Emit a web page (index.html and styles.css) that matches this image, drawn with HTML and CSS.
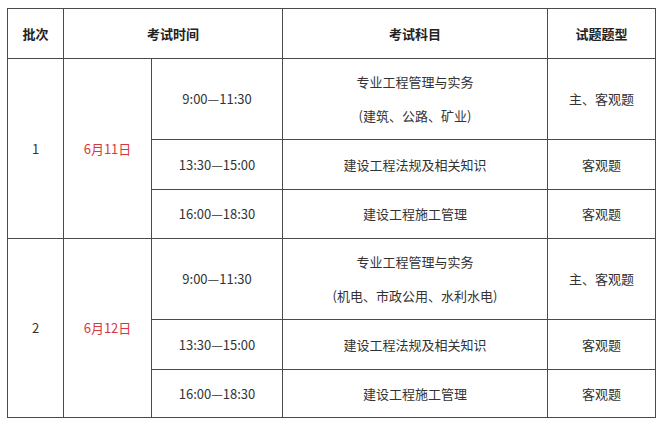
FILE: index.html
```html
<!DOCTYPE html>
<html lang="zh">
<head>
<meta charset="utf-8">
<link rel="stylesheet" href="styles.css">
</head>
<body>
<table class="exam">
  <colgroup>
    <col class="c1"><col class="c2"><col class="c3"><col class="c4"><col class="c5">
  </colgroup>
  <thead>
    <tr class="h-head">
      <th>批次</th>
      <th colspan="2">考试时间</th>
      <th>考试科目</th>
      <th>试题题型</th>
    </tr>
  </thead>
  <tbody>
    <tr class="h-tall">
      <td rowspan="3">1</td>
      <td rowspan="3" class="date">6月11日</td>
      <td>9:00—11:30</td>
      <td><div class="line">专业工程管理与实务</div><div class="line">(建筑、公路、矿业)</div></td>
      <td>主、客观题</td>
    </tr>
    <tr class="h-50">
      <td>13:30—15:00</td>
      <td>建设工程法规及相关知识</td>
      <td>客观题</td>
    </tr>
    <tr class="h-49">
      <td>16:00—18:30</td>
      <td>建设工程施工管理</td>
      <td>客观题</td>
    </tr>
    <tr class="h-tall">
      <td rowspan="3">2</td>
      <td rowspan="3" class="date">6月12日</td>
      <td>9:00—11:30</td>
      <td><div class="line">专业工程管理与实务</div><div class="line">(机电、市政公用、水利水电)</div></td>
      <td>主、客观题</td>
    </tr>
    <tr class="h-50">
      <td>13:30—15:00</td>
      <td>建设工程法规及相关知识</td>
      <td>客观题</td>
    </tr>
    <tr class="h-48">
      <td>16:00—18:30</td>
      <td>建设工程施工管理</td>
      <td>客观题</td>
    </tr>
  </tbody>
</table>
</body>
</html>
```
FILE: styles.css
```css
html, body {
  margin: 0;
  padding: 0;
  background: #ffffff;
}
body {
  font-family: "Noto Sans CJK SC", "Noto Sans", sans-serif;
  font-size: 13px;
  color: #333333;
}
.exam {
  margin: 8px 0 0 7px;
  border-collapse: collapse;
  table-layout: fixed;
  width: 648px;
}
.c1 { width: 56px; }
.c2 { width: 88px; }
.c3 { width: 131px; }
.c4 { width: 265px; }
.c5 { width: 108px; }
.exam th,
.exam td {
  border: 1px solid #4a4a4a;
  padding: 0;
  text-align: center;
  vertical-align: middle;
  line-height: 18px;
}
.exam th {
  font-weight: bold;
  color: #222222;
}
.h-head { height: 50px; }
.h-tall { height: 81px; }
.h-50 { height: 50px; }
.h-49 { height: 49px; }
.h-48 { height: 48px; }
.line {
  line-height: 34px;
}
.date {
  color: #d9363e;
}
```
